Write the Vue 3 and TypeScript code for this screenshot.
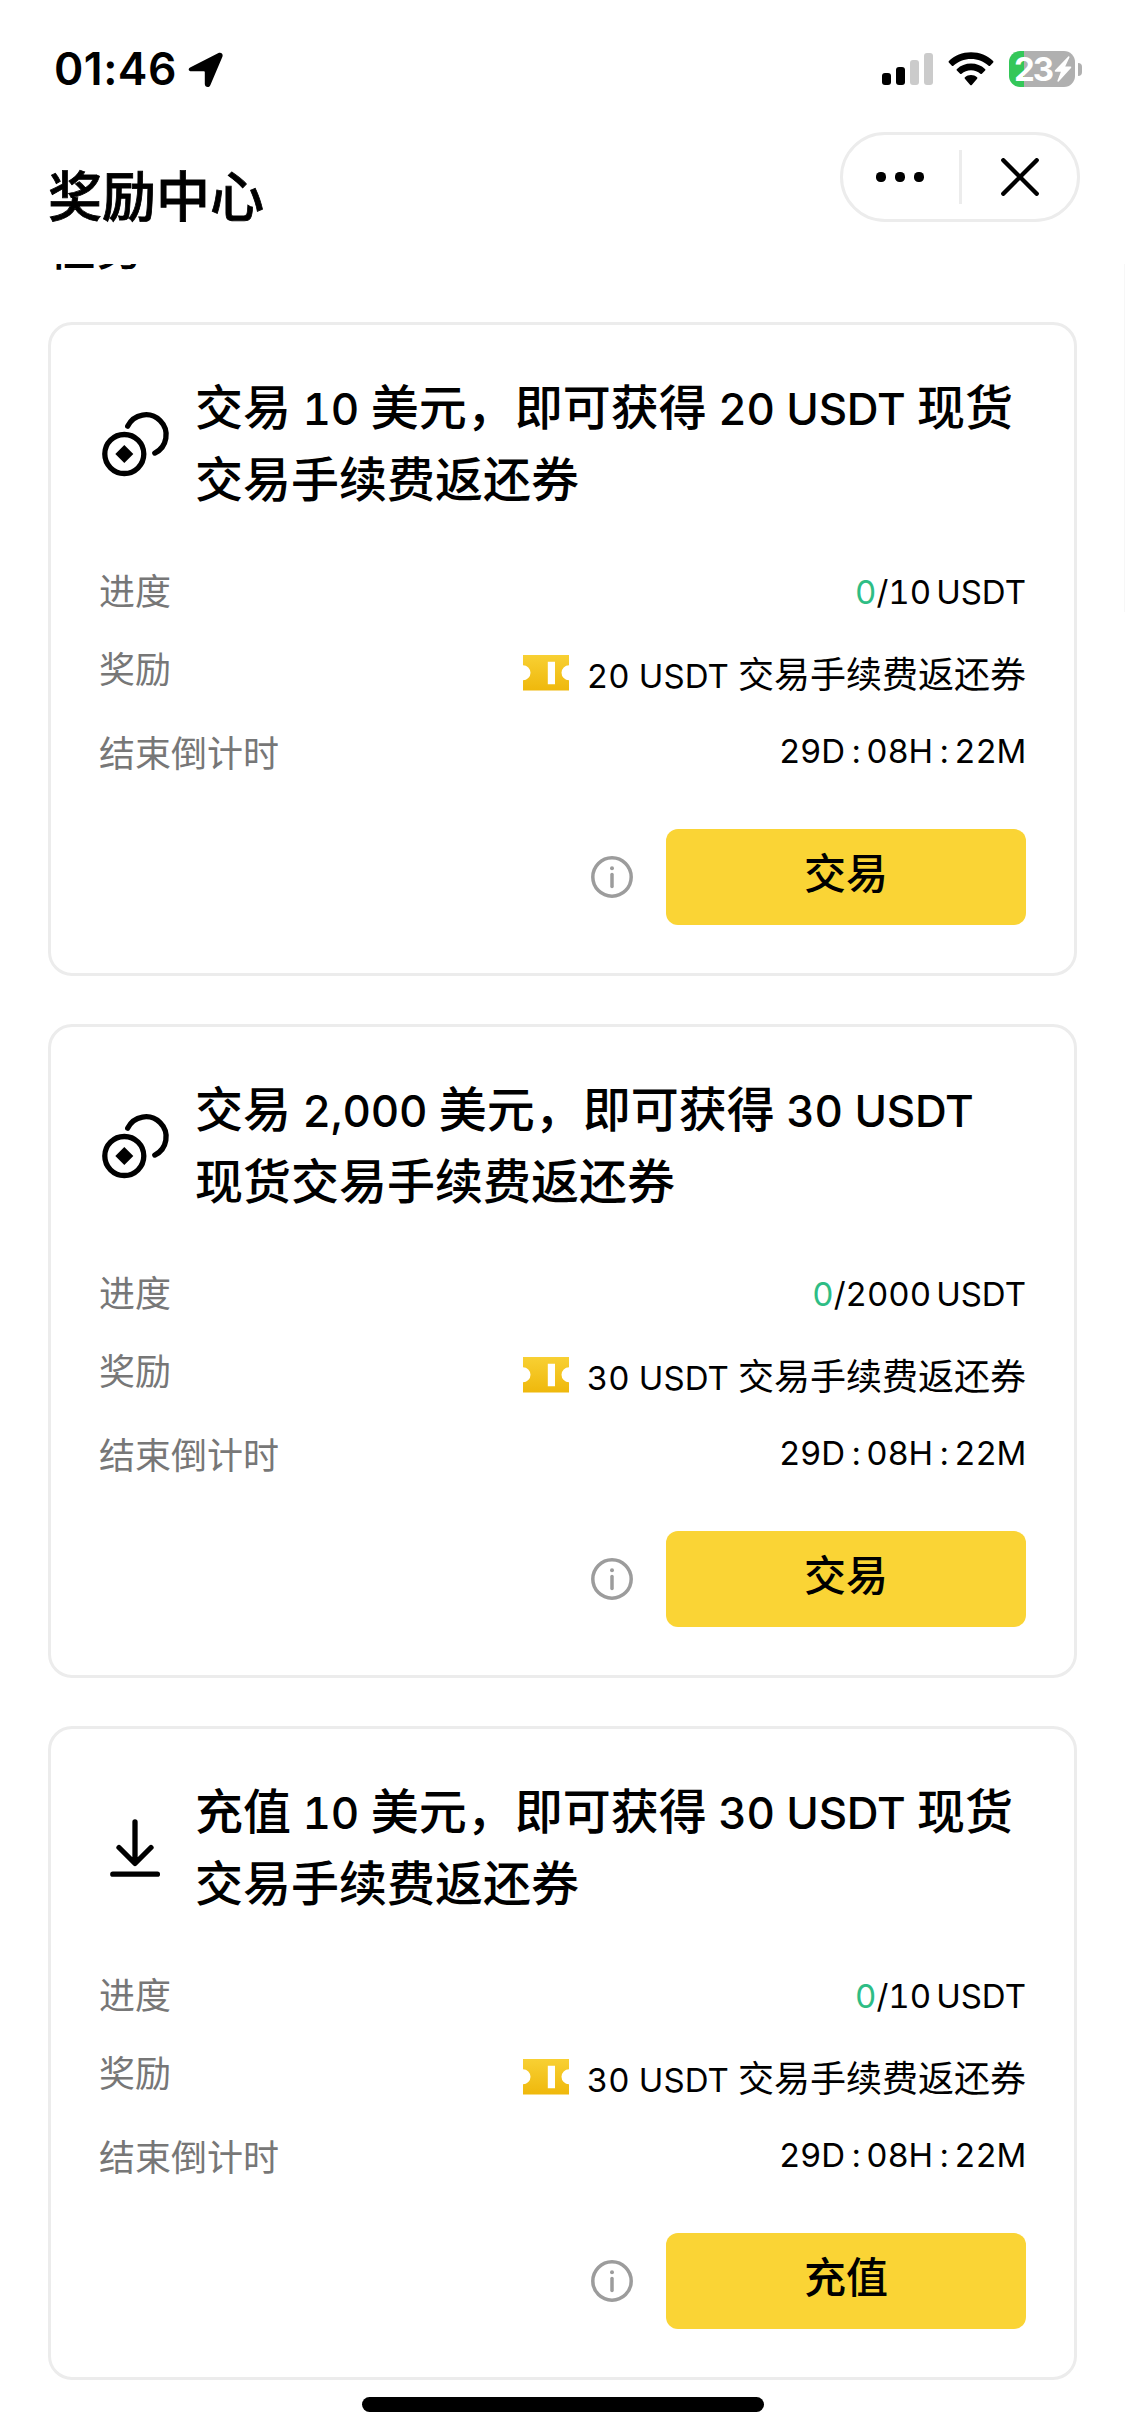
<script setup lang="ts">
interface Task {
  icon: 'coins' | 'deposit'
  title: string[]
  target: string
  reward: string
  action: string
}

interface Run {
  text: string
  latin: boolean
}

const tasks: Task[] = [
  {
    icon: 'coins',
    title: ['交易 10 美元，即可获得 20 USDT 现货', '交易手续费返还券'],
    target: '10',
    reward: '20 USDT 交易手续费返还券',
    action: '交易',
  },
  {
    icon: 'coins',
    title: ['交易 2,000 美元，即可获得 30 USDT', '现货交易手续费返还券'],
    target: '2000',
    reward: '30 USDT 交易手续费返还券',
    action: '交易',
  },
  {
    icon: 'deposit',
    title: ['充值 10 美元，即可获得 30 USDT 现货', '交易手续费返还券'],
    target: '10',
    reward: '30 USDT 交易手续费返还券',
    action: '充值',
  },
]

const countdown: string[] = ['29D', '08H', '22M']

// Splits mixed text so that Latin letters and digits get their own typeface.
function runs(text: string): Run[] {
  const parts = text.match(/[\x20-\x7e]+|[^\x20-\x7e]+/g) ?? []
  return parts.map((part) => ({ text: part, latin: /^[\x20-\x7e]/.test(part) }))
}
</script>

<template>
  <div class="page">
    <div class="status">
      <div class="clock">
        <span class="time">01:46</span>
        <svg class="location" width="36" height="36" viewBox="0 0 36 36">
          <path d="M2.600 15.200 30 1.300C33-.2 35.600 1.800 34.300 5L22.300 33.200C21 36.200 16.800 35.400 16.800 32V20.300C16.800 19.600 16.400 19.200 15.700 19.200H3.600C.3 19.200-.4 16.700 2.600 15.200z" />
        </svg>
      </div>
      <div class="indicators">
        <svg class="signal" width="51" height="32" viewBox="0 0 51 32">
          <rect x="0" y="20" width="9" height="12" rx="3" />
          <rect x="14" y="14" width="9" height="18" rx="3" />
          <rect x="28" y="7" width="9" height="25" rx="3" fill="#cbcbcb" />
          <rect x="42" y="0" width="9" height="32" rx="3" fill="#cbcbcb" />
        </svg>
        <svg class="wifi" width="46" height="34" viewBox="0 0 46 34">
          <path d="M23 .3C31.600.3 39.400 3.600 45.100 9c.5.5.5 1.100.1 1.600l-3.100 3.100c-.5.4-1 .4-1.500 0C36 9.500 29.800 7 23 7S10 9.500 5.400 13.700c-.5.4-1 .4-1.500 0L.8 10.600C.4 10.100.4 9.500.9 9 6.600 3.600 14.400.3 23 .3z" />
          <path d="M23 11.600c5.400 0 10.300 2 14 5.400.5.4.5 1.100.1 1.600l-3.200 3.100c-.4.5-1 .5-1.500.1-2.500-2.200-5.800-3.500-9.400-3.500s-6.900 1.300-9.400 3.500c-.5.4-1.100.4-1.500-.1L8.900 18.600c-.4-.5-.4-1.200.1-1.600 3.700-3.400 8.600-5.400 14-5.400z" />
          <path d="M23 23c2.300 0 4.400.8 6 2.200.5.4.5 1 .1 1.500l-5.300 6.200c-.4.5-1.200.5-1.600 0l-5.300-6.200c-.4-.5-.4-1.100.1-1.500 1.600-1.400 3.700-2.200 6-2.200z" />
        </svg>
        <div class="battery">
          <span class="level">23</span>
          <svg class="bolt" width="18" height="26" viewBox="0 0 18 26">
            <path d="M14.200.5 1 14.200c-.6.7-.3 1.500.6 1.500h5.300L3.500 24.600c-.4 1.100.5 1.500 1.200.8L17 11.900c.7-.8.3-1.500-.6-1.500h-5.200l4.200-9c.4-1-.5-1.600-1.200-.9z" />
          </svg>
        </div>
        <span class="battery-tip"></span>
      </div>
    </div>

    <header class="header">
      <h1>奖励中心</h1>
      <div class="capsule">
        <button class="more" aria-label="更多">
          <i></i><i></i><i></i>
        </button>
        <span class="divider"></span>
        <button class="close" aria-label="关闭">
          <svg width="38" height="38" viewBox="0 0 38 38">
            <path d="M2.300 2.300 35.700 35.700M35.700 2.300 2.300 35.700" />
          </svg>
        </button>
      </div>
    </header>

    <main class="scroller">
      <div class="section"><h2>任务</h2></div>

      <article v-for="(task, index) in tasks" :key="index" class="card">
        <div class="head">
          <svg v-if="task.icon === 'coins'" class="task-icon" viewBox="0 0 72 72">
            <circle cx="25.300" cy="45" r="19.500" />
            <path d="M28.700 17.200A20.200 20.200 0 1 1 55.800 44.100" />
            <path class="solid" d="M25.300 36l9 9-9 9-9-9z" />
          </svg>
          <svg v-else class="task-icon" viewBox="0 0 72 72">
            <path d="M36 8.800V50M20 34.500 36 50.500 52 34.500M13.800 61.200H58.400" />
          </svg>
          <div class="title">
            <p v-for="line in task.title" :key="line"><span v-for="(run, i) in runs(line)" :key="i" :class="{ latin: run.latin }">{{ run.text }}</span></p>
          </div>
        </div>

        <div class="row progress">
          <span class="label">进度</span>
          <span class="value latin"><span class="done">0</span>/{{ task.target }}<span class="unit">USDT</span></span>
        </div>
        <div class="row reward">
          <span class="label">奖励</span>
          <span class="value">
            <svg class="ticket" width="46" height="36" viewBox="0 0 46 36">
              <defs>
                <linearGradient :id="`ticket-${index}`" x1="0" y1="0" x2="0" y2="1">
                  <stop offset="0" stop-color="#f8d033" />
                  <stop offset="1" stop-color="#efb80c" />
                </linearGradient>
              </defs>
              <path :fill="`url(#ticket-${index})`" fill-rule="evenodd" d="M0 0H46V10.300a7.500 7.500 0 0 0 0 15V35.500H0V25.300a7.500 7.500 0 0 0 0-15zM24.800 6.800V29.200H32V6.800z" />
            </svg>
            <span><span v-for="(run, i) in runs(task.reward)" :key="i" :class="{ latin: run.latin }">{{ run.text }}</span></span>
          </span>
        </div>
        <div class="row ends">
          <span class="label">结束倒计时</span>
          <span class="value latin"><template v-for="(part, i) in countdown" :key="part"><span v-if="i > 0" class="colon">:</span>{{ part }}</template></span>
        </div>

        <div class="actions">
          <svg class="info" width="42" height="42" viewBox="0 0 42 42">
            <circle cx="21" cy="21" r="19.200" />
            <path d="M21 18.500V30.500" />
            <circle class="dot" cx="21" cy="12.200" r="2" />
          </svg>
          <button class="go">{{ task.action }}</button>
        </div>
      </article>
    </main>

    <div class="scrollbar"></div>
    <div class="home"></div>
  </div>
</template>

<style>
body {
  margin: 0;
  background: #fff;
}
</style>

<style scoped>
.page {
  position: relative;
  width: 1125px;
  height: 2436px;
  overflow: hidden;
  background: #fff;
  color: #000;
  font-family: 'Noto Sans CJK SC', sans-serif;
}

h1,
h2,
p {
  margin: 0;
  font-weight: 500;
}

button {
  padding: 0;
  border: 0;
  background: none;
  color: inherit;
  font-family: inherit;
}

svg {
  display: block;
  flex: none;
}

.status {
  display: flex;
  justify-content: space-between;
  align-items: center;
  height: 138px;
  box-sizing: border-box;
  padding: 0 43px 0 54px;
}

.clock,
.indicators {
  display: flex;
  align-items: center;
}

.time {
  width: 134px;
  font: 600 44.5px/54px Inter, sans-serif;
  letter-spacing: 0.5px;
}

.location {
  margin-top: 2px;
}

.signal {
  margin-right: 15px;
}

.wifi {
  margin-right: 15px;
  margin-top: -1px;
}

.battery {
  display: flex;
  align-items: center;
  width: 66px;
  height: 36px;
  box-sizing: border-box;
  padding-left: 5px;
  border-radius: 11px;
  background: linear-gradient(90deg, #34c759 15px, #b0b0b0 15px);
}

.level {
  width: 40px;
  color: #fff;
  font: 700 33px/36px Inter, sans-serif;
  letter-spacing: -2px;
}

.bolt {
  fill: #fff;
}

.battery-tip {
  width: 4px;
  height: 13px;
  margin-left: 3px;
  border-radius: 0 6px 6px 0;
  background: #b0b0b0;
}

.header {
  display: flex;
  justify-content: space-between;
  height: 126px;
  padding: 0 45px 0 48px;
}

h1 {
  margin-top: 20px;
  font-size: 54px;
  line-height: 72px;
  -webkit-text-stroke: 0.8px #000;
}

.capsule {
  display: flex;
  align-items: center;
  width: 240px;
  height: 90px;
  margin-top: -6px;
  box-sizing: border-box;
  border: 3px solid #ececec;
  border-radius: 45px;
}

.more,
.close {
  display: flex;
  justify-content: center;
  align-items: center;
  gap: 9px;
}

.more {
  width: 116px;
  padding-right: 2px;
  box-sizing: border-box;
}

.close {
  flex: 1;
  padding-left: 1px;
}

.more i {
  width: 10px;
  height: 10px;
  border-radius: 4.5px;
  background: #000;
}

.divider {
  width: 3px;
  height: 54px;
  background: #ececec;
}

.close path {
  fill: none;
  stroke: #000;
  stroke-width: 4.4;
  stroke-linecap: round;
}

.scroller {
  display: flex;
  flex-direction: column;
  gap: 48px;
  padding: 0 48px;
}

.section {
  display: flex;
  align-items: flex-end;
  height: 10px;
  overflow: hidden;
}

h2 {
  font-size: 48px;
  line-height: 60px;
}

.card {
  height: 654px;
  box-sizing: border-box;
  padding: 43px 48px 48px;
  border: 3px solid #ececec;
  border-radius: 24px;
}

.head {
  display: flex;
  gap: 24px;
  height: 144px;
  margin-bottom: 49px;
}

.task-icon {
  width: 72px;
  height: 72px;
  margin-top: 41px;
  fill: none;
  stroke: #000;
  stroke-width: 5.3;
  stroke-linecap: round;
  stroke-linejoin: round;
}

.task-icon .solid {
  fill: #000;
  stroke: none;
}

.title {
  font-size: 48px;
  font-weight: 500;
  line-height: 72px;
  white-space: pre;
}

.title p {
  height: 72px;
}

.latin {
  font-family: Inter, sans-serif;
  font-variant-numeric: tabular-nums;
}

.title .latin {
  font-size: 44px;
  line-height: 1;
  letter-spacing: -0.25px;
}

.row {
  display: flex;
  justify-content: space-between;
  align-items: flex-start;
  height: 54px;
  margin-bottom: 25px;
  font-size: 36px;
  line-height: 54px;
}

.label {
  color: #777;
}

.value {
  display: flex;
  white-space: pre;
}

.row .latin {
  font-size: 33px;
}

.row > .value.latin {
  padding-top: 4px;
}

.reward .value .latin {
  line-height: 1;
  letter-spacing: 0.1px;
}

.progress .label {
  padding-top: 1px;
}

.reward .value {
  padding-top: 5px;
}

.ends {
  margin: 26px 0 55px;
}

.ends .label {
  padding-top: 4px;
}

.ends .latin {
  letter-spacing: -0.3px;
}

.ticket {
  margin: 10px 18px 0 0;
}

.done {
  color: #2ebd85;
}

.unit {
  margin-left: 5px;
}

.colon {
  margin: 0 6px 0 7px;
}

.actions {
  display: flex;
  justify-content: flex-end;
  align-items: center;
  gap: 33px;
}

.info {
  fill: none;
  stroke: #9c9c9c;
  stroke-width: 3.500;
  stroke-linecap: round;
}

.info .dot {
  fill: #9c9c9c;
  stroke: none;
}

.go {
  width: 360px;
  height: 96px;
  padding-bottom: 12px;
  border-radius: 12px;
  background: #fad435;
  font-size: 42px;
  font-weight: 500;
  line-height: 84px;
}

.scrollbar {
  position: absolute;
  top: 264px;
  right: 0;
  width: 1px;
  height: 348px;
  background: #f7f7f7;
}

.home {
  position: absolute;
  bottom: 24px;
  left: 362px;
  width: 402px;
  height: 15px;
  border-radius: 8px;
  background: #000;
}
</style>
